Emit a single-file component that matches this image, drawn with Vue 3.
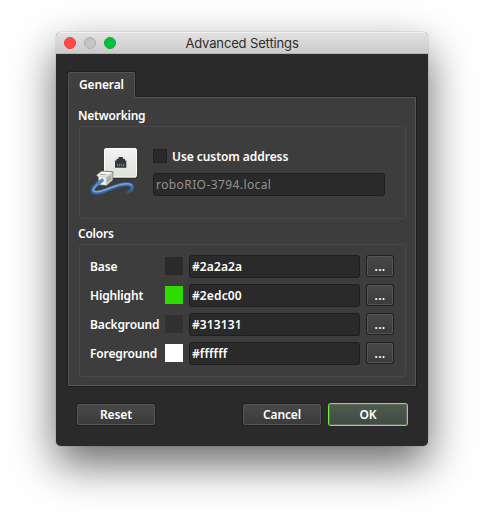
<script setup>
import { ref } from 'vue'

const customAddress = ref(false)
const address = ref('roboRIO-3794.local')
const colors = ref([
  { key: 'base', label: 'Base', value: '#2a2a2a' },
  { key: 'highlight', label: 'Highlight', value: '#2edc00' },
  { key: 'background', label: 'Background', value: '#313131' },
  { key: 'foreground', label: 'Foreground', value: '#ffffff' },
])
</script>

<template>
  <main class="desktop">
    <section class="window">
      <header class="titlebar">
        <div class="lights">
          <i class="light close"></i>
          <i class="light minimize"></i>
          <i class="light zoom"></i>
        </div>
        <h1>Advanced Settings</h1>
      </header>

      <div class="content">
        <nav class="tabs"><div class="tab">General</div></nav>

        <div class="pane">
          <h2>Networking</h2>
          <div class="group network">
            <svg class="net-icon" width="48" height="50" viewBox="0 0 48 50">
              <defs>
                <linearGradient id="plate" x1="0" y1="0" x2="0" y2="1">
                  <stop offset="0" stop-color="#f3f3f1" />
                  <stop offset="1" stop-color="#dfe1dc" />
                </linearGradient>
                <linearGradient id="cable" gradientUnits="userSpaceOnUse" x1="41" y1="41" x2="34" y2="49">
                  <stop offset="0" stop-color="#3b6db0" />
                  <stop offset="1" stop-color="#3b6db0" stop-opacity="0" />
                </linearGradient>
              </defs>
              <rect x="14" y="2" width="33" height="31" rx="2" fill="#292929" opacity=".5" />
              <rect x="14.5" y="2.5" width="32" height="28.5" rx="1.5" fill="url(#plate)" stroke="#fafaf9" />
              <path d="M15 31.5h31" stroke="#b8bab5" />
              <path d="M25 21.8v-7.3h1.6v-1.7h2v-1.7h4.3v1.7h2v1.7h1.4v7.3z" fill="#30363a" />
              <path d="M27.5 17.8v2.6M29.6 17.8v2.6M31.7 17.8v2.6M33.8 17.8v2.6" stroke="#8b822f" stroke-width="1.1" />
              <path d="M42.2 40C43.2 43 40 45.6 35.5 47.8" fill="none" stroke="url(#cable)" stroke-width="3.2" />
              <path d="M12 34.5C6.5 38.3 2.6 42.3 2.7 44.6C2.9 48 10 46.7 16 44.2C22 41.7 27 39.5 32 38.7C37 37.8 41.5 37.6 42.3 41" fill="none" stroke="#3b6db0" stroke-width="3.8" />
              <path d="M12 34.8C7 38.4 3.1 42.4 3.3 44.3C4.2 46.7 10 45.7 16 43.4C22 41 27 39 32 38.2C37 37.4 40.5 37.6 41.7 39.6" fill="none" stroke="#79a6df" stroke-width="1.6" />
              <path d="M6.2 29.2l5.3-4.2 11.3.8v8.4l-6.4 5.6-8-1v-7.3z" fill="#d8d8d2" stroke="#4d4f4b" stroke-width=".7" />
              <path d="M7 29.1l4.9-3.4 10 .6-6 4z" fill="#f6f6f2" />
              <path d="M16.2 31l6.2-4.2v7.2l-6.2 5.2z" fill="#c4c5bf" />
              <path d="M10 28.4l6.4.4M18 31.5v4M20 30.2v4" stroke="#858781" stroke-width=".8" />
              <path d="M8.8 31.1l6.8.7v6.8l-6.8-.7z" fill="#f3f3f0" />
              <path d="M13.2 33.4L7 38.6" stroke="#4e83c9" stroke-width="3.4" />
            </svg>
            <div class="network-fields">
              <label class="check">
                <input v-model="customAddress" type="checkbox" />
                <span>Use custom address</span>
              </label>
              <input v-model="address" class="field address" type="text" disabled />
            </div>
          </div>

          <h2>Colors</h2>
          <div class="group colors">
            <div v-for="c in colors" :key="c.key" class="row">
              <span class="name">{{ c.label }}</span>
              <i class="swatch" :style="{ background: c.value }"></i>
              <input v-model="c.value" class="field" type="text" />
              <button class="btn more">...</button>
            </div>
          </div>
        </div>

        <footer class="actions">
          <button class="btn">Reset</button>
          <span class="spacer"></span>
          <button class="btn">Cancel</button>
          <button class="btn ok">OK</button>
        </footer>
      </div>
    </section>
  </main>
</template>

<style>
body { background: #fff; overflow: hidden; }
</style>

<style scoped>
* { box-sizing: border-box; }
.desktop {
  width: 484px;
  height: 526px;
  padding: 32px 56px 80px;
  overflow: hidden;
  font-family: "Noto Sans", "Open Sans", sans-serif;
  font-size: 12px;
  font-weight: 600;
  letter-spacing: -.14px;
  color: #fff;
}
.window {
  height: 414px;
  border-radius: 5px;
  background: #2a2a2a;
  box-shadow: 0 0 1px rgba(0, 0, 0, .5), 0 18px 44px rgba(0, 0, 0, .6);
}
.titlebar {
  position: relative;
  height: 22px;
  display: flex;
  align-items: center;
  justify-content: center;
  border-radius: 5px 5px 0 0;
  background: linear-gradient(#e2e2e2, #cbcbcb);
  border-bottom: 1px solid #b2b6b2;
  box-shadow: inset 0 1px #f2f2f2;
}
.lights {
  position: absolute;
  left: 8px;
  top: 5px;
  display: flex;
  gap: 8px;
}
.light { width: 12px; height: 12px; border-radius: 50%; border: 1px solid; }
.close { background: #ff4a47; border-color: #e5413f; }
.minimize { background: #c4c4c4; border-color: #adadad; }
.zoom { background: #00bf3c; border-color: #12a737; }
h1 {
  margin: 0;
  padding-top: 1px;
  font: 400 13px/20px Inter, sans-serif;
  letter-spacing: -.14px;
  color: #2e2e2e;
  white-space: nowrap;
}
.content { padding: 18px 12px 0; }
.tabs { position: relative; z-index: 1; height: 25px; display: flex; }
.tab {
  width: 67px;
  height: 26px;
  padding: 4px 0 0 10px;
  line-height: 16px;
  border: 1px solid #555;
  border-bottom: 0;
  border-radius: 2px 2px 0 0;
  background: linear-gradient(#414141, #3d3d3d);
  box-shadow: 0 -1px #202020, -1px 0 #202020, 1px -1px #202020;
}
.pane {
  width: 348px;
  height: 289px;
  padding: 9px 9px 0 10px;
  border: 1px solid #555;
  background: #3d3d3d;
  box-shadow: 0 0 0 1px #202020;
}
h2 { margin: 0 0 0 -1px; height: 19px; font-size: 12px; line-height: 18px; font-weight: 600; letter-spacing: -.22px; }
.group { border: 1px solid #484848; border-radius: 3px; }
.network {
  height: 93px;
  margin-bottom: 6px;
  display: flex;
  padding: 19px 0 0 10px;
}
.net-icon { flex: none; margin-right: 15px; }
.network-fields { padding-top: 3px; }
.check { display: flex; align-items: center; gap: 5px; height: 14px; letter-spacing: -.06px; white-space: nowrap; }
.check input {
  appearance: none;
  width: 14px;
  height: 14px;
  margin: 0;
  background: #2a2a2a;
  border: 1px solid #222;
}
.field {
  display: block;
  width: 171px;
  height: 23px;
  margin: 0;
  padding: 0 2px;
  font: inherit;
  letter-spacing: .12px;
  color: #fff;
  background: #2a2a2a;
  border: 1px solid #1e1e1e;
  border-radius: 3px;
}
.address { width: 232px; margin-top: 10px; color: #929292; font-weight: 400; letter-spacing: .41px; }
.colors { height: 133px; padding: 10px 0 0 10px; display: flex; flex-direction: column; gap: 6px; }
.row { display: grid; grid-template-columns: 69px 18px 171px 28px; column-gap: 6px; align-items: center; height: 23px; }
.name { white-space: nowrap; }
.swatch { width: 18px; height: 18px; margin-top: -1px; }
.btn {
  width: 78px;
  height: 21px;
  margin: 0;
  padding: 0;
  font: inherit;
  line-height: 18px;
  letter-spacing: -.1px;
  color: #fff;
  border: 1px solid #555;
  border-radius: 2px;
  background: linear-gradient(#484848, #3b3b3b);
  box-shadow: 0 0 0 1px #202020;
}
.more { width: 26px; height: 20px; margin: -1px 0 0 1px; line-height: 17px; letter-spacing: .3px; }
.actions { display: flex; align-items: center; padding: 17px 9px 0; height: 40px; }
.spacer { flex: 1; }
.ok {
  margin-left: 8px;
  background: linear-gradient(#505b4f, #424a41);
  border-color: #5d7059;
  box-shadow: 0 0 0 1px #6cf246;
}
</style>
